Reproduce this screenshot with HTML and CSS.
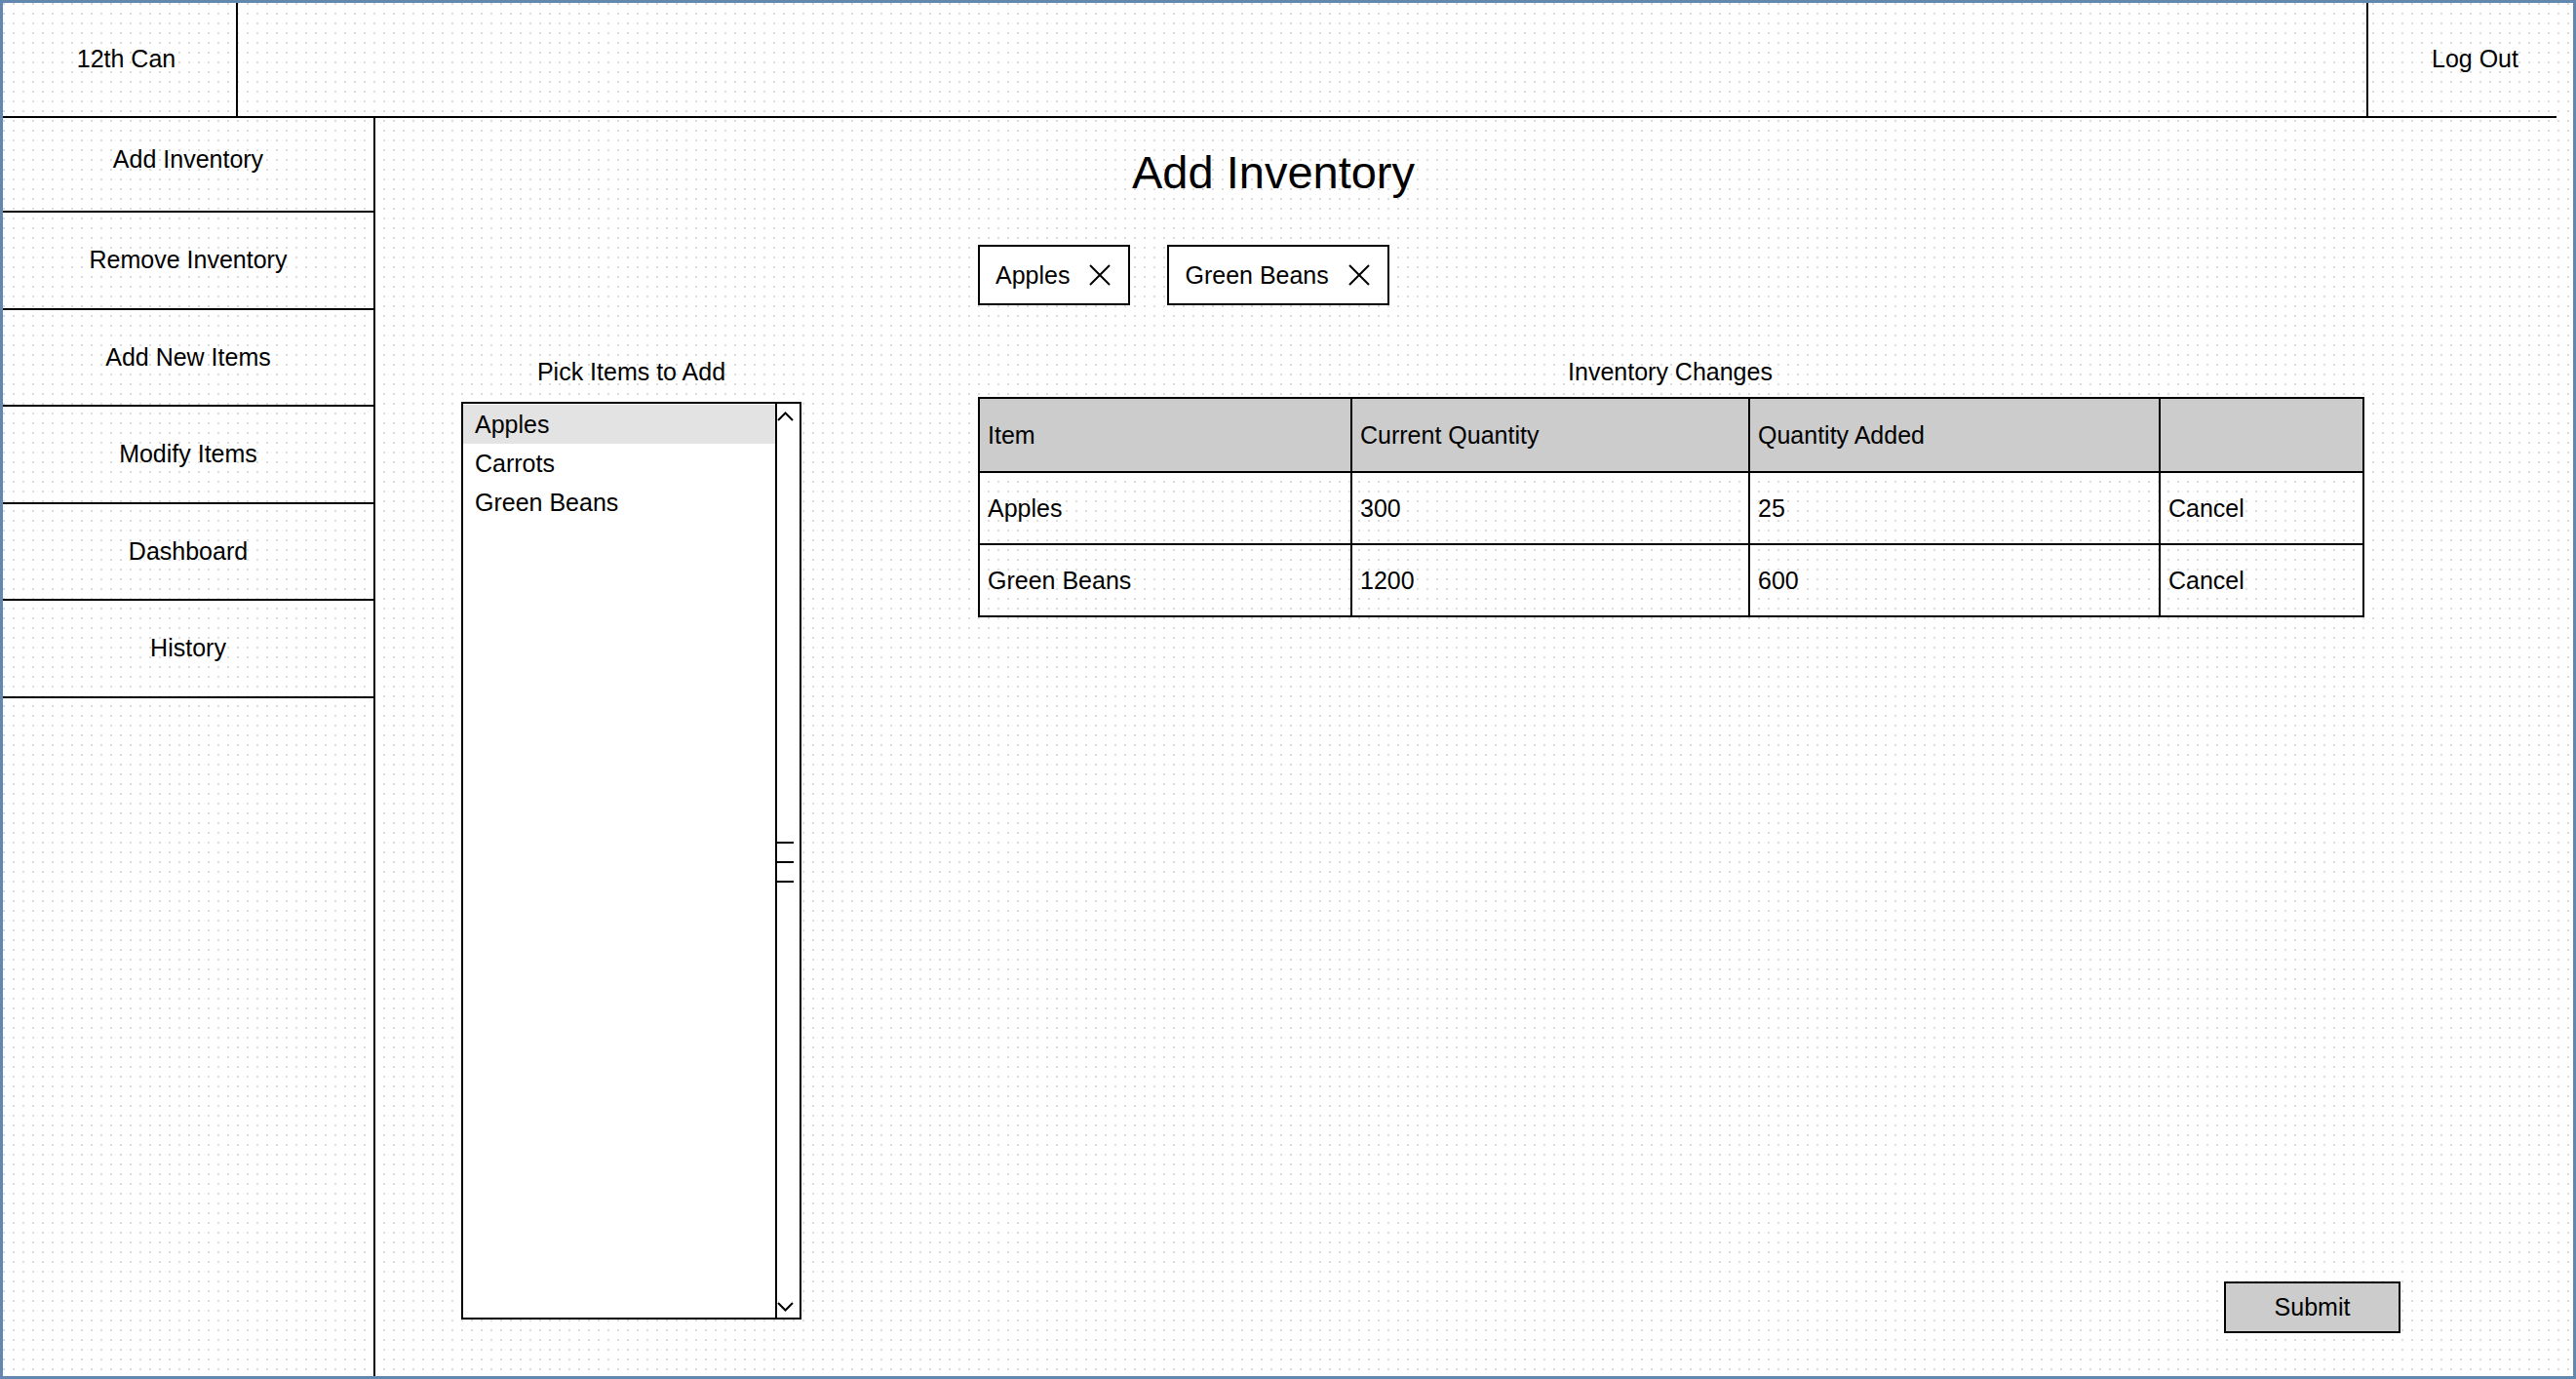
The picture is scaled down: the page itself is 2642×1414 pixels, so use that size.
FILE: index.html
```html
<!DOCTYPE html>
<html lang="en">
<head>
<meta charset="utf-8">
<title>Add Inventory</title>
<link rel="stylesheet" href="styles.css">
</head>
<body>
<div class="frame">
  <header class="topbar">
    <div class="brand">12th Can</div>
    <div class="topbar-fill"></div>
    <div class="logout">Log Out</div>
  </header>
  <div class="layout">
    <nav class="sidebar">
      <div class="nav-item">Add Inventory</div>
      <div class="nav-item">Remove Inventory</div>
      <div class="nav-item">Add New Items</div>
      <div class="nav-item">Modify Items</div>
      <div class="nav-item">Dashboard</div>
      <div class="nav-item">History</div>
    </nav>
    <main class="content">
      <h1 class="title">Add Inventory</h1>
      <div class="chips">
        <div class="chip"><span>Apples</span><svg class="chip-x" viewBox="0 0 22 22"><path d="M1 1L21 21M21 1L1 21"/></svg></div>
        <div class="chip"><span>Green Beans</span><svg class="chip-x" viewBox="0 0 22 22"><path d="M1 1L21 21M21 1L1 21"/></svg></div>
      </div>
      <div class="label label-left">Pick Items to Add</div>
      <div class="label label-right">Inventory Changes</div>
      <div class="picker">
        <div class="listbox">
          <ul class="list">
            <li class="selected">Apples</li>
            <li>Carrots</li>
            <li>Green Beans</li>
          </ul>
          <div class="scrollbar">
            <svg class="chev chev-up" viewBox="0 0 17 10"><path d="M1 9L8.5 1.5L16 9"/></svg>
            <div class="thumb"><span></span><span></span><span></span></div>
            <svg class="chev chev-down" viewBox="0 0 17 10"><path d="M1 1L8.5 8.5L16 1"/></svg>
          </div>
        </div>
      </div>
      <div class="changes">
        <table class="grid">
          <colgroup>
            <col class="c-item"><col class="c-cur"><col class="c-add"><col class="c-act">
          </colgroup>
          <thead>
            <tr><th>Item</th><th>Current Quantity</th><th>Quantity Added</th><th></th></tr>
          </thead>
          <tbody>
            <tr><td>Apples</td><td>300</td><td>25</td><td>Cancel</td></tr>
            <tr><td>Green Beans</td><td>1200</td><td>600</td><td>Cancel</td></tr>
          </tbody>
        </table>
        <button class="submit" type="button">Submit</button>
      </div>
    </main>
  </div>
</div>
</body>
</html>
```
FILE: styles.css
```css
html, body {
  margin: 0;
  padding: 0;
}

body {
  font-family: "Liberation Sans", Arial, sans-serif;
  font-size: 25px;
  color: #000;
  background: #fff;
}

.frame {
  width: 2642px;
  height: 1414px;
  box-sizing: border-box;
  border: 3px solid #6288b0;
  background-color: #fff;
  background-image:
    linear-gradient(90deg, transparent 0 2px, #fff 2px),
    linear-gradient(#dcdcdc 0 2px, transparent 2px);
  background-size: 10px 10px;
  display: flex;
  flex-direction: column;
  overflow: hidden;
}

/* ---------- top bar ---------- */
.topbar {
  flex: none;
  display: flex;
  height: 118px;
  box-sizing: border-box;
  border-bottom: 2px solid #000;
  margin-right: 17px;
}

.brand {
  width: 241px;
  box-sizing: border-box;
  border-right: 2px solid #000;
  padding: 0 0 2px 14px;
  display: flex;
  align-items: center;
  justify-content: center;
}

.topbar-fill {
  flex: 1;
}

.logout {
  width: 195px;
  box-sizing: border-box;
  border-left: 2px solid #000;
  padding: 0 0 2px 26px;
  display: flex;
  align-items: center;
  justify-content: center;
}

/* ---------- layout ---------- */
.layout {
  flex: 1;
  display: flex;
  min-height: 0;
}

.sidebar {
  flex: none;
  width: 382px;
  box-sizing: border-box;
  border-right: 2px solid #000;
}

.nav-item {
  height: 99.5px;
  box-sizing: border-box;
  border-bottom: 2px solid #000;
  display: flex;
  align-items: center;
  justify-content: center;
}

.nav-item:first-child {
  height: 97px;
  padding-bottom: 10px;
}

/* ---------- main content ---------- */
.content {
  flex: 1;
  display: grid;
  grid-template-columns: 349px 1459px;
  column-gap: 181px;
  align-content: start;
  padding: 28px 0 0 88px;
}

.title {
  grid-column: 1 / -1;
  margin: 0 0 0 688px;
  font-size: 47px;
  font-weight: normal;
  line-height: 56px;
}

.chips {
  grid-column: 2;
  margin-top: 46px;
  display: flex;
  gap: 38px;
}

.chip {
  height: 62px;
  box-sizing: border-box;
  border: 2px solid #000;
  background: #fff;
  display: flex;
  align-items: center;
  gap: 20px;
  padding: 0 18px 0 16px;
}

.chip-x {
  width: 22px;
  height: 22px;
  fill: none;
  stroke: #000;
  stroke-width: 2;
}

.label {
  margin-top: 53px;
  line-height: 30px;
  text-align: center;
}

.label-left {
  grid-column: 1;
}

.label-right {
  grid-column: 2;
  width: 1420px;
}

/* ---------- list picker ---------- */
.picker {
  grid-column: 1;
  margin-top: 11px;
  padding: 5px 0 14px;
}

.listbox {
  height: 941px;
  box-sizing: border-box;
  border: 2px solid #000;
  background: #fff;
  display: flex;
}

.list {
  flex: 1;
  margin: 0;
  padding: 1px 0 0;
  list-style: none;
}

.list li {
  height: 40px;
  line-height: 40px;
  padding-left: 12px;
}

.list li.selected {
  background: #e3e3e3;
}

.scrollbar {
  width: 25px;
  box-sizing: border-box;
  border-left: 2px solid #000;
  display: flex;
  flex-direction: column;
  justify-content: space-between;
  padding: 8px 0 6px;
}

.chev {
  flex: none;
  width: 17px;
  height: 10px;
  fill: none;
  stroke: #000;
  stroke-width: 2;
}

.thumb {
  display: flex;
  flex-direction: column;
  gap: 18px;
}

.thumb span {
  display: block;
  width: 17px;
  height: 2px;
  background: #000;
}

/* ---------- table ---------- */
.changes {
  grid-column: 2;
  margin-top: 11px;
  display: flex;
  flex-direction: column;
}

.grid {
  width: 1420px;
  table-layout: fixed;
  border-collapse: collapse;
  border: 2px solid #000;
}

.c-item { width: 382px; }
.c-cur { width: 408px; }
.c-add { width: 421px; }
.c-act { width: 209px; }

.grid th,
.grid td {
  border: 2px solid #000;
  padding: 0 8px;
  text-align: left;
  font-weight: normal;
  white-space: nowrap;
}

.grid th {
  background: #ccc;
  height: 74px;
}

.grid td {
  height: 72px;
}

.submit {
  margin-top: auto;
  align-self: flex-end;
  width: 181px;
  height: 53px;
  box-sizing: border-box;
  border: 2px solid #000;
  background: #ccc;
  font-family: "Liberation Sans", Arial, sans-serif;
  font-size: 25px;
  color: #000;
  padding: 0;
}
```
